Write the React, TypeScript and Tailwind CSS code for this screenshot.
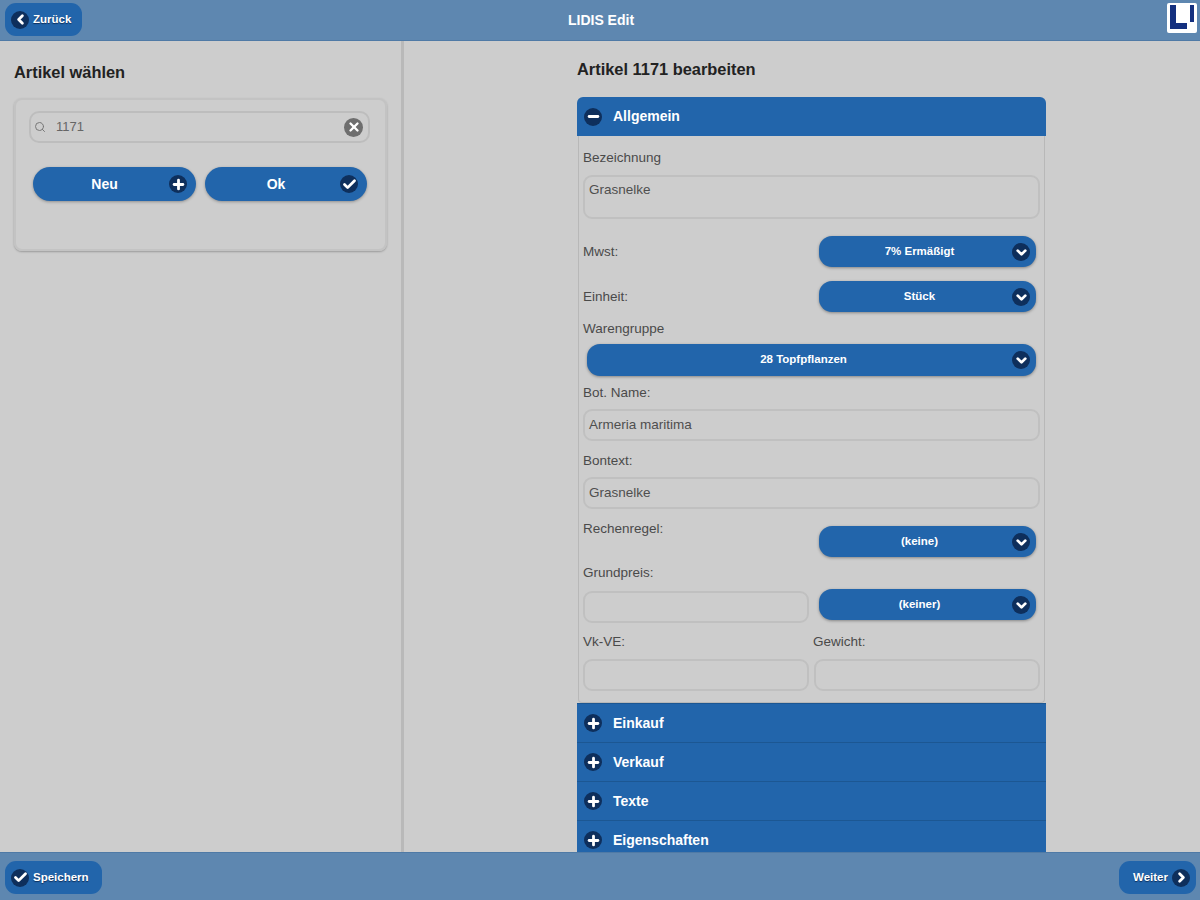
import { Check, ChevronDown, ChevronLeft, ChevronRight, Minus, Plus, Search, X } from 'lucide-react'
import type { ComponentType, ReactNode } from 'react'

type IconType = ComponentType<{ className?: string; strokeWidth?: number }>

function RoundIcon({ icon: Icon, size = 'h-[18px] w-[18px]' }: { icon: IconType; size?: string }) {
  return (
    <span className={`flex shrink-0 items-center justify-center rounded-full bg-[#0e2f5c] ${size}`}>
      <Icon className="h-[15px] w-[15px] text-white" strokeWidth={4.5} />
    </span>
  )
}

function BarButton({ icon, label, right, width }: { icon: IconType; label: string; right?: boolean; width: string }) {
  return (
    <button
      className={`flex h-[33px] items-center gap-[4px] rounded-[11px] bg-[#2265ab] px-[6px] text-[11.5px] font-bold text-white ${width} ${right ? 'justify-end' : ''}`}
    >
      {!right && <RoundIcon icon={icon} />}
      <span className="[text-shadow:0_1px_1px_#0e2f5c]">{label}</span>
      {right && <RoundIcon icon={icon} />}
    </button>
  )
}

function ActionButton({ icon, label, width }: { icon: IconType; label: string; width: string }) {
  return (
    <button
      className={`relative flex h-[34px] items-center justify-center rounded-full bg-[#2265ab] pr-[20px] text-[14px] font-bold text-white shadow-[0_1px_3px_rgba(0,0,0,0.3)] ${width}`}
    >
      {label}
      <span className="absolute right-[9px] top-[8px]">
        <RoundIcon icon={icon} />
      </span>
    </button>
  )
}

function SelectBox({ label, width = 'w-[217px]', height = 'h-[31px]', className = '' }: { label: string; width?: string; height?: string; className?: string }) {
  return (
    <div
      className={`relative flex items-center justify-center rounded-[13px] bg-[#2265ab] pr-[16px] text-[11.5px] font-bold text-white shadow-[0_1px_3px_rgba(0,0,0,0.35)] ${width} ${height} ${className}`}
    >
      {label}
      <span className="absolute right-[6px] top-[7px]">
        <RoundIcon icon={ChevronDown} />
      </span>
    </div>
  )
}

function Label({ children, className = '' }: { children: ReactNode; className?: string }) {
  return <div className={`h-4 text-[13.5px] leading-4 text-[#4a4a4a] ${className}`}>{children}</div>
}

function Field({ value, className = 'w-[457px]' }: { value?: string; className?: string }) {
  return (
    <div className={`flex h-[32px] items-center rounded-[9px] border-2 border-[#c0c0c0] pl-[4px] text-[13.5px] text-[#4f4f4f] ${className}`}>
      {value}
    </div>
  )
}

function AccordionHead({ icon, label, top }: { icon: IconType; label: string; top?: boolean }) {
  return (
    <div className={`flex h-[39px] shrink-0 items-center gap-[11px] bg-[#2265ab] pl-[7px] text-[14px] font-bold text-white ${top ? 'rounded-t-[6px]' : 'border-t border-[#1c5793]'}`}>
      <RoundIcon icon={icon} />
      {label}
    </div>
  )
}

export default function App() {
  return (
    <div className="flex h-[900px] w-[1200px] flex-col overflow-hidden bg-[#cdcdcd] font-['Liberation_Sans',Arial,sans-serif]">
      <header className="flex h-[41px] shrink-0 items-start border-b border-[#4f7aa6] bg-[#5e87b0] pl-[5px] pr-[3px] pt-[3px]">
        <div className="flex-1">
          <BarButton icon={ChevronLeft} label="Zurück" width="w-[77px]" />
        </div>
        <div className="mt-[9px] text-[14px] font-bold leading-4 text-white">LIDIS Edit</div>
        <div className="flex flex-1 justify-end">
          <svg viewBox="0 0 30 30" className="h-[30px] w-[30px]">
            <rect width="30" height="30" rx="2" fill="#ffffff" />
            <path d="M3 2h6v18h11v6H3z" fill="#14307f" />
            <rect x="23" y="2" width="4" height="17" fill="#14307f" />
          </svg>
        </div>
      </header>

      <main className="flex min-h-0 flex-1">
        <aside className="w-[401px] shrink-0 pl-[14px] pt-[21px]">
          <h2 className="h-5 text-[16.4px] font-bold leading-5 text-[#222222]">Artikel wählen</h2>
          <div className="mt-[16px] h-[153px] w-[373px] rounded-[8px] border-2 border-[#c3c3c3] px-[13px] pt-[11px] shadow-[0_1px_2px_rgba(0,0,0,0.25)]">
            <div className="flex h-[32px] w-[341px] items-center rounded-[10px] border-2 border-[#bdbdbd] pl-[3px] pr-[5px] text-[13px] text-[#666666]">
              <Search className="h-[12px] w-[12px] text-[#777777]" strokeWidth={2} />
              <span className="ml-[10px] flex-1">1171</span>
              <span className="flex h-[19px] w-[19px] items-center justify-center rounded-full bg-[#6e6e6e]">
                <X className="h-[14px] w-[14px] text-white" strokeWidth={4} />
              </span>
            </div>
            <div className="ml-[4px] mt-[24px] flex gap-[9px]">
              <ActionButton icon={Plus} label="Neu" width="w-[163px]" />
              <ActionButton icon={Check} label="Ok" width="w-[162px]" />
            </div>
          </div>
        </aside>

        <div className="w-[3px] shrink-0 bg-[#b9b9b9]" />

        <section className="min-h-0 flex-1 overflow-hidden pl-[173px] pt-[18px]">
          <h2 className="h-5 text-[16.4px] font-bold leading-5 text-[#222222]">Artikel 1171 bearbeiten</h2>
          <div className="mt-[18px] w-[469px]">
            <AccordionHead icon={Minus} label="Allgemein" top />
            <div className="mx-px rounded-b-[4px] border-x border-b border-[#b8b8b8] pb-[11px] pl-[4px] pt-[14px]">
              <Label>Bezeichnung</Label>
              <div className="mt-[9px] h-[44px] w-[457px] rounded-[9px] border-2 border-[#c0c0c0] pl-[4px] pt-[5px] text-[13.5px] leading-4 text-[#4f4f4f]">
                Grasnelke
              </div>

              <div className="mt-[17px] flex items-center justify-between pr-[8px]">
                <Label>Mwst:</Label>
                <SelectBox label="7% Ermäßigt" />
              </div>
              <div className="mt-[14px] flex items-center justify-between pr-[8px]">
                <Label>Einheit:</Label>
                <SelectBox label="Stück" />
              </div>

              <Label className="mt-[9px]">Warengruppe</Label>
              <SelectBox label="28 Topfpflanzen" width="w-[449px]" height="h-[32px]" className="ml-[4px] mt-[7px]" />

              <Label className="mt-[9px]">Bot. Name:</Label>
              <Field value="Armeria maritima" className="mt-[8px] w-[457px]" />

              <Label className="mt-[12px]">Bontext:</Label>
              <Field value="Grasnelke" className="mt-[8px] w-[457px]" />

              <div className="mt-[17px] flex items-start justify-between pr-[8px]">
                <Label className="-mt-[5px]">Rechenregel:</Label>
                <SelectBox label="(keine)" />
              </div>

              <Label className="mt-[8px]">Grundpreis:</Label>
              <div className="mt-[8px] flex items-start gap-[10px]">
                <Field className="mt-[2px] w-[226px]" />
                <SelectBox label="(keiner)" />
              </div>

              <div className="mt-[11px] flex gap-[4px]">
                <Label className="w-[226px]">Vk-VE:</Label>
                <Label>Gewicht:</Label>
              </div>
              <div className="mt-[9px] flex gap-[5px]">
                <Field className="w-[226px]" />
                <Field className="w-[226px]" />
              </div>
            </div>
            <AccordionHead icon={Plus} label="Einkauf" />
            <AccordionHead icon={Plus} label="Verkauf" />
            <AccordionHead icon={Plus} label="Texte" />
            <AccordionHead icon={Plus} label="Eigenschaften" />
          </div>
        </section>
      </main>

      <footer className="flex h-[48px] shrink-0 items-start justify-between border-t border-[#4f7aa6] bg-[#5e87b0] pl-[5px] pr-[4px] pt-[8px]">
        <BarButton icon={Check} label="Speichern" width="w-[97px]" />
        <BarButton icon={ChevronRight} label="Weiter" right width="w-[77px]" />
      </footer>
    </div>
  )
}
